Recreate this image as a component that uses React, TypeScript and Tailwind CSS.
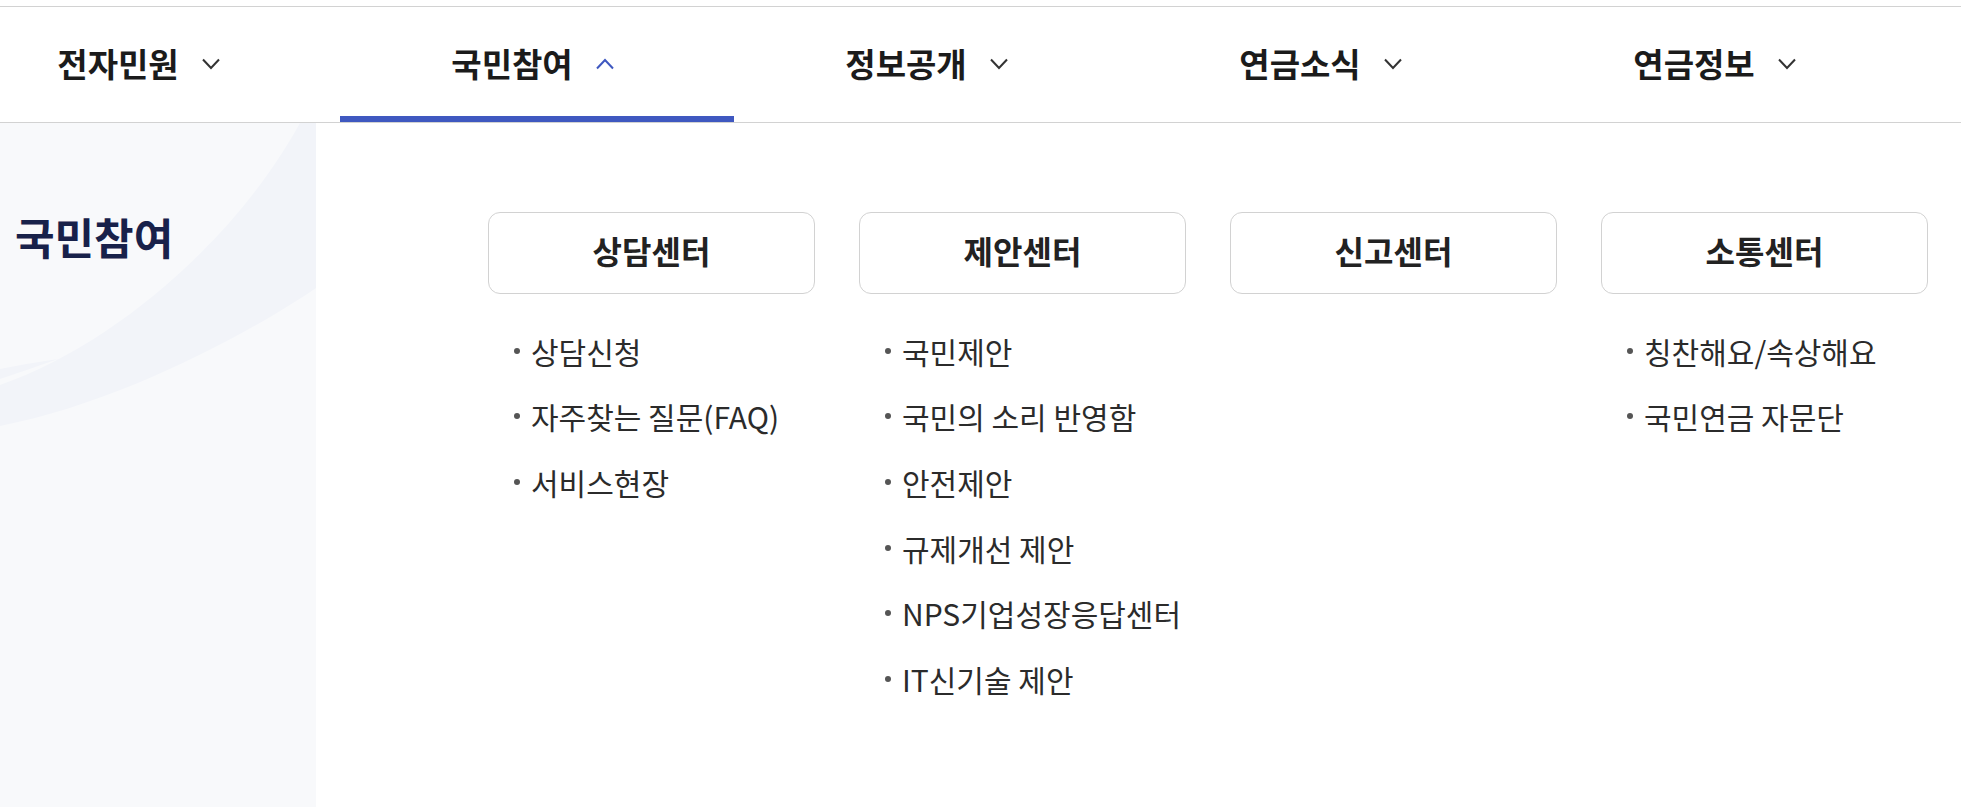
import React from "react";

const FONT = '"Noto Sans CJK KR", "Noto Sans", sans-serif';

const navItems = [
  { label: "전자민원", active: false },
  { label: "국민참여", active: true },
  { label: "정보공개", active: false },
  { label: "연금소식", active: false },
  { label: "연금정보", active: false },
];

const columns: { title: string; items: string[] }[] = [
  { title: "상담센터", items: ["상담신청", "자주찾는 질문(FAQ)", "서비스현장"] },
  {
    title: "제안센터",
    items: ["국민제안", "국민의 소리 반영함", "안전제안", "규제개선 제안", "NPS기업성장응답센터", "IT신기술 제안"],
  },
  { title: "신고센터", items: [] },
  { title: "소통센터", items: ["칭찬해요/속상해요", "국민연금 자문단"] },
];

function Chevron({ up, active }: { up: boolean; active: boolean }) {
  return (
    <svg width="20" height="12" viewBox="0 0 20 12" fill="none" className="shrink-0">
      <polyline
        points={up ? "2,10.5 10,2 18,10.5" : "2,1.5 10,10 18,1.5"}
        stroke={active ? "#3f58c0" : "#333333"}
        strokeWidth="2"
        fill="none"
      />
    </svg>
  );
}

export default function App() {
  return (
    <div className="w-full h-[807px] overflow-hidden bg-white flex flex-col" style={{ fontFamily: FONT }}>
      <div className="h-[6px] shrink-0" />
      <header className="h-[117px] shrink-0 border-t border-b border-[#d2d2d2] overflow-hidden">
        <nav className="flex h-full ml-[-54px]">
          {navItems.map((n) => (
            <div key={n.label} className="relative w-[394px] shrink-0 h-full flex items-center justify-center">
              <div className="flex items-center gap-[22px] pr-[8px] pb-[2px]">
                <span className="text-[33px] font-bold text-[#1b1b1b] leading-none">{n.label}</span>
                <Chevron up={n.active} active={n.active} />
              </div>
              {n.active && <div className="absolute left-0 right-0 bottom-0 h-[6px] bg-[#3f58c0]" />}
            </div>
          ))}
        </nav>
      </header>
      <div className="flex flex-1 min-h-0">
        <aside className="relative w-[316px] shrink-0 bg-[#f8f9fb] overflow-hidden">
          <svg className="absolute inset-0" width="316" height="685" viewBox="0 0 316 685" fill="none">
            <path
              d="M300 0 L316 0 L316 165 C250 210 120 280 0 303 L0 262 C120 220 240 110 300 0 Z"
              fill="#f2f4f9"
            />
            <path d="M0 246 Q30 240 58 236 Q30 246 0 256 Z" fill="#f2f4f9" />
          </svg>
          <h2 className="relative pl-[15px] pt-[88px] text-[43px] font-bold text-[#18214a] leading-[1.2]">
            국민참여
          </h2>
        </aside>
        <main className="flex-1 pl-[172px] pt-[89px]">
          <div className="grid grid-cols-[repeat(4,327px)] gap-x-[44px]">
            {columns.map((c) => (
              <div key={c.title} className="flex flex-col">
                <div className="h-[82px] rounded-[12px] border border-[#d2d2d2] flex items-center justify-center pb-[6px]">
                  <span className="text-[32px] font-bold text-[#222] leading-none">{c.title}</span>
                </div>
                <ul className="mt-[24px] flex flex-col">
                  {c.items.map((it) => (
                    <li key={it} className="h-[65.6px] flex items-center pl-[26px]">
                      <span className="w-[6px] h-[6px] rounded-full bg-[#555] mr-[11px] shrink-0" />
                      <span className="text-[30px] text-[#2b2b2b] leading-none whitespace-nowrap">{it}</span>
                    </li>
                  ))}
                </ul>
              </div>
            ))}
          </div>
        </main>
      </div>
    </div>
  );
}
